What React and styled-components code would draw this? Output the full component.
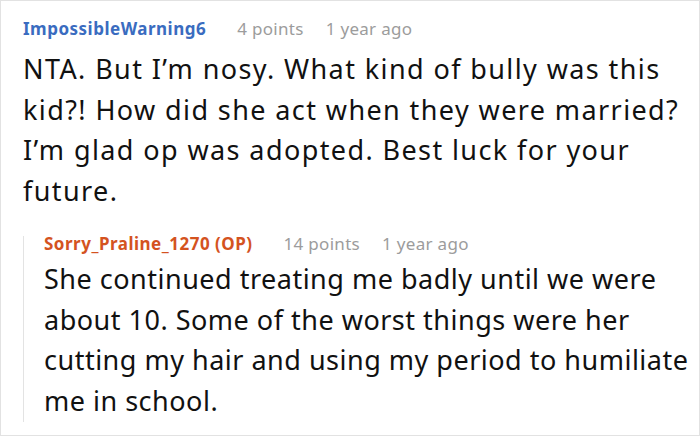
import React from "react";
import styled, { createGlobalStyle } from "styled-components";

const Global = createGlobalStyle`
  html, body { margin: 0; padding: 0; background: #fff; }
  body { font-family: "Noto Sans", "Open Sans", sans-serif; }
`;

const Frame = styled.div`
  box-sizing: border-box;
  width: 700px;
  height: 436px;
  border: 1px solid #e2e2e2;
  background: #fff;
  padding: 20px 0 0 22px;
  overflow: hidden;
`;

const Comment = styled.div`
  display: flex;
  flex-direction: column;
`;

const Meta = styled.div`
  display: flex;
  align-items: baseline;
  gap: 22px;
  font-size: 17px;
  line-height: 16px;
  letter-spacing: 0.3px;
  color: #9c9c9c;
  white-space: nowrap;
`;

const Author = styled.span`
  font-weight: 700;
  letter-spacing: 0.5px;
  color: ${(p) => p.$color};
  margin-right: 9px;
`;

const Body = styled.p`
  margin: ${(p) => p.$top}px 0 0;
  font-size: 27px;
  line-height: 40.7px;
  letter-spacing: ${(p) => p.$spacing}px;
  color: #111;
  padding-right: ${(p) => p.$right}px;
`;

const Reply = styled.div`
  margin-top: 24px;
  border-left: 1px solid #e3e3e3;
  padding-left: 20px;
  display: flex;
  flex-direction: column;
`;

export default function App() {
  return (
    <>
      <Global />
      <Frame>
        <Comment>
          <Meta>
            <Author $color="#3a6cc0">ImpossibleWarning6</Author>
            <span>4 points</span>
            <span>1 year ago</span>
          </Meta>
          <Body $top={12} $spacing={1.4} $right={16}>
            NTA. But I’m nosy. What kind of bully was this kid?! How did she act when they were married? I’m glad op was adopted. Best luck for your future.
          </Body>
          <Reply>
            <Meta>
              <Author $color="#d4531f">Sorry_Praline_1270 (OP)</Author>
              <span>14 points</span>
              <span>1 year ago</span>
            </Meta>
            <Body $top={7} $spacing={0.5} $right={0}>
              She continued treating me badly until we were about 10. Some of the worst things were her cutting my hair and using my period to humiliate me in school.
            </Body>
          </Reply>
        </Comment>
      </Frame>
    </>
  );
}
